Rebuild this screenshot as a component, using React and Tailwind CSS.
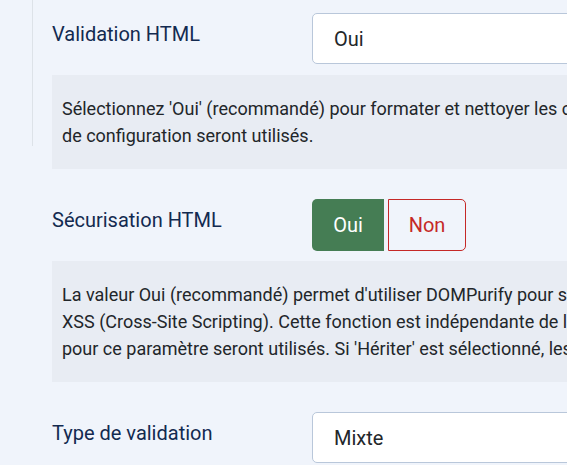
import React from "react";

function Select({ value }) {
  return (
    <div className="w-[400px] h-[51px] shrink-0 bg-white border border-[#b9c7da] rounded-[5px] flex items-center pl-[21px] text-[20px] text-[#22262a]">
      {value}
    </div>
  );
}

function Label({ children }) {
  return (
    <div className="w-[260px] shrink-0 pt-[7px] text-[20px] leading-[28px] text-[#132a50]">
      {children}
    </div>
  );
}

function Hint({ lines }) {
  return (
    <div className="w-[700px] bg-[#e8ecf3] py-[20px] pl-[10px] text-[18px] leading-[27px] text-[#22262a] whitespace-nowrap overflow-hidden">
      {lines.map((l, i) => (
        <div key={i}>{l}</div>
      ))}
    </div>
  );
}

export default function App() {
  return (
    <div
      className="w-[567px] h-[465px] overflow-hidden bg-[#f0f4fb] flex"
      style={{ fontFamily: "Roboto, 'Noto Sans', sans-serif" }}
    >
      <div className="w-[33px] shrink-0">
        <div className="h-[146px] w-[33px] border-r border-[#dde2e8]"></div>
      </div>
      <div className="pl-[19px] pt-[13px] flex flex-col shrink-0 w-[720px]">
        <div className="flex">
          <Label>Validation HTML</Label>
          <Select value="Oui" />
        </div>
        <div className="mt-[11px]">
          <Hint
            lines={[
              "Sélectionnez 'Oui' (recommandé) pour formater et nettoyer les codes HTML. Si 'Hériter' est sélectionné, les paramètres",
              "de configuration seront utilisés.",
            ]}
          />
        </div>
        <div className="flex mt-[30px]">
          <Label>Sécurisation HTML</Label>
          <div className="flex gap-[4px] h-[52px]">
            <div className="w-[72px] h-full bg-[#457d54] text-white rounded-l-[5px] flex items-center justify-center text-[20px]">
              Oui
            </div>
            <div className="w-[78px] h-full border border-[#c52827] text-[#c52827] rounded-r-[5px] flex items-center justify-center text-[20px]">
              Non
            </div>
          </div>
        </div>
        <div className="mt-[10px]">
          <Hint
            lines={[
              "La valeur Oui (recommandé) permet d'utiliser DOMPurify pour sécuriser le code HTML contre les attaques",
              "XSS (Cross-Site Scripting). Cette fonction est indépendante de la validation HTML. Si 'Non', les paramètres",
              "pour ce paramètre seront utilisés. Si 'Hériter' est sélectionné, les paramètres de configuration seront utilisés.",
            ]}
          />
        </div>
        <div className="flex mt-[30px]">
          <Label>Type de validation</Label>
          <Select value="Mixte" />
        </div>
      </div>
    </div>
  );
}
